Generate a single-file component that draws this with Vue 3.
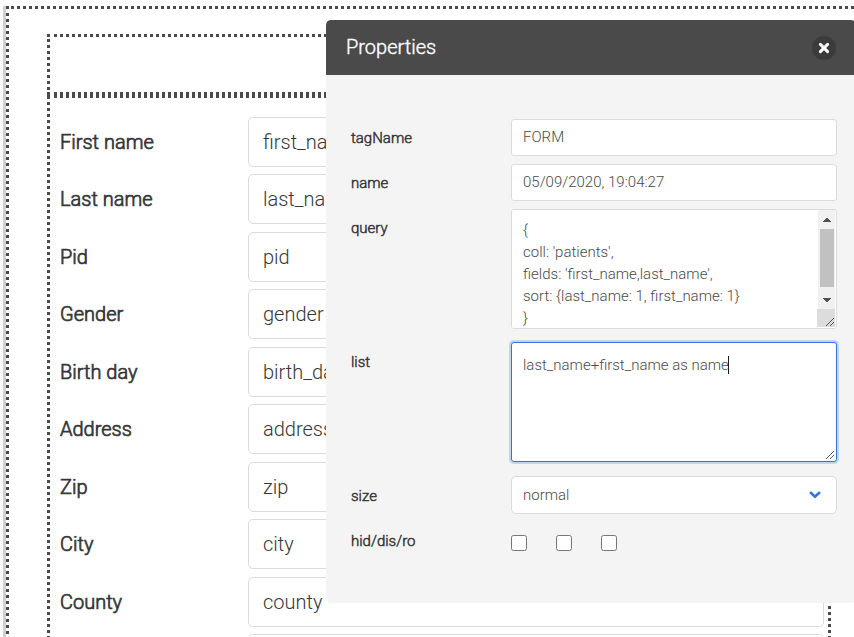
<script setup>
import { ref, onMounted } from 'vue'

const fields = [
  { label: 'First name', value: 'first_name' },
  { label: 'Last name', value: 'last_name' },
  { label: 'Pid', value: 'pid' },
  { label: 'Gender', value: 'gender' },
  { label: 'Birth day', value: 'birth_day' },
  { label: 'Address', value: 'address' },
  { label: 'Zip', value: 'zip' },
  { label: 'City', value: 'city' },
  { label: 'County', value: 'county' },
  { label: '', value: '' }
]

const tagName = ref('FORM')
const name = ref('05/09/2020, 19:04:27')
const query = ref(`{
coll: 'patients',
fields: 'first_name,last_name',
sort: {last_name: 1, first_name: 1}
}`)
const list = ref('last_name+first_name as name')
const size = ref('normal')
const flags = ref([])
const listBox = ref(null)
const caretLeft = ref(0)

// Places the drawn caret after the last character of the last line.
function placeCaret() {
  const style = getComputedStyle(listBox.value)
  const ctx = document.createElement('canvas').getContext('2d')
  ctx.font = `${style.fontWeight} ${style.fontSize} ${style.fontFamily}`
  const line = list.value.split('\n').pop()
  caretLeft.value = Math.round(ctx.measureText(line).width + parseInt(style.paddingLeft))
}

onMounted(() => {
  const el = listBox.value
  el.focus()
  el.setSelectionRange(el.value.length, el.value.length)
  placeCaret()
})
</script>

<template>
  <div class="page">
    <main class="canvas">
      <div class="block block-head"></div>
      <form class="block block-form" @submit.prevent>
        <div v-for="(f, i) in fields" :key="i" class="row">
          <label :for="'f-' + i">{{ f.label }}</label>
          <input :id="'f-' + i" class="field" type="text" :value="f.value" />
        </div>
      </form>
    </main>

    <section class="dialog" role="dialog" aria-labelledby="dialog-title">
      <header class="dialog-head">
        <h2 id="dialog-title">Properties</h2>
        <button type="button" class="close" aria-label="Close">
          <svg viewBox="0 0 12 12" width="12" height="12">
            <path d="M2.4 2.4 L9.6 9.6 M9.6 2.4 L2.4 9.6" stroke="#fff" stroke-width="3" stroke-linecap="round" fill="none" />
          </svg>
        </button>
      </header>
      <div class="dialog-body">
        <div class="prop">
          <label for="p-tag">tagName</label>
          <input id="p-tag" v-model="tagName" type="text" class="control" />
        </div>
        <div class="prop">
          <label for="p-name">name</label>
          <input id="p-name" v-model="name" type="text" class="control" />
        </div>
        <div class="prop">
          <label for="p-query">query</label>
          <div class="stack">
            <textarea id="p-query" v-model="query" class="control area scroll" spellcheck="false"></textarea>
            <svg class="scrollbar" viewBox="0 0 18 117" width="18" height="117" shape-rendering="crispEdges" aria-hidden="true">
              <rect x="1" width="17" height="99" fill="#f1f1f1" />
              <path d="M5 12 L9.5 7.5 L14 12 Z" fill="#505050" />
              <rect x="3" y="19" width="14" height="58" fill="#c1c1c1" />
              <path d="M5 88 L14 88 L9.5 92.5 Z" fill="#505050" />
              <rect y="99" width="18" height="18" fill="#dcdcdc" />
              <path d="M9 116 L17 108 M13 116 L17 112" stroke="#4f4f4f" shape-rendering="auto" />
            </svg>
          </div>
        </div>
        <div class="prop list-prop">
          <label for="p-list">list</label>
          <div class="stack">
            <textarea id="p-list" ref="listBox" v-model="list" class="control area list-area" spellcheck="false" @input="placeCaret"></textarea>
            <span class="caret" :style="{ left: caretLeft + 'px' }"></span>
            <svg class="grip" viewBox="0 0 10 10" width="10" height="10" aria-hidden="true">
              <path d="M1 9 L9 1 M5 9 L9 5" stroke="#5a5a5a" fill="none" />
            </svg>
          </div>
        </div>
        <div class="prop size-prop">
          <label for="p-size">size</label>
          <div class="select">
            <select id="p-size" v-model="size" class="control">
              <option>normal</option>
              <option>small</option>
              <option>large</option>
            </select>
            <svg viewBox="0 0 12 8" width="12" height="8">
              <path d="M1.8 1.8 L6 5.8 L10.2 1.8" stroke="#3273dc" stroke-width="2.6" stroke-linecap="round" fill="none" />
            </svg>
          </div>
        </div>
        <div class="prop" role="group" aria-labelledby="p-flags">
          <span id="p-flags" class="name">hid/dis/ro</span>
          <div class="checks">
            <input v-model="flags" type="checkbox" value="hid" aria-label="hid" />
            <input v-model="flags" type="checkbox" value="dis" aria-label="dis" />
            <input v-model="flags" type="checkbox" value="ro" aria-label="ro" />
          </div>
        </div>
      </div>
    </section>
  </div>
</template>

<style>
body {
  background: #fff;
}
</style>

<style scoped>
.page,
.page * {
  box-sizing: border-box;
}
.page {
  position: relative;
  height: 100vh;
  overflow: hidden;
  padding: 6px 0 0 3px;
  font-family: Roboto, "Open Sans", sans-serif;
  font-weight: 300;
  color: #4a4a4a;
}
.canvas {
  border-top: 3px dotted #4a4a4a;
  border-left: 3px dotted #4a4a4a;
  padding: 25px 23px 0 38px;
  box-shadow: -3px 0 0 #d0d0d0;
  margin-left: 3px;
}
.block {
  border: 3px dotted #4a4a4a;
}
.block-head {
  height: 61px;
}
.block-form {
  padding: 19px 4px 0 10px;
}
.row {
  display: grid;
  grid-template-columns: 188px 1fr;
  align-items: center;
  margin-bottom: 7px;
}
.row:nth-child(even) {
  margin-bottom: 8px;
}
.row label {
  font-size: 20px;
  line-height: 24px;
  color: #363636;
  -webkit-text-stroke: 0.7px #363636;
}
.field {
  width: 100%;
  height: 50px;
  padding: 0 14px;
  border: 1px solid #dbdbdb;
  border-radius: 5px;
  background: #fff;
  font: inherit;
  font-size: 20px;
  color: #363636;
}
.dialog {
  position: absolute;
  top: 20px;
  left: 326px;
  right: -2px;
  border-radius: 5px;
  overflow: hidden;
  background: #f4f4f4;
}
.dialog-head {
  display: flex;
  align-items: center;
  justify-content: space-between;
  height: 55px;
  padding: 0 20px;
  background: #4a4a4a;
}
.dialog-head h2 {
  margin: 0;
  padding-bottom: 2px;
  font-size: 20px;
  font-weight: 300;
  color: #fff;
  -webkit-text-stroke: 0.4px #fff;
}
.close {
  display: grid;
  place-items: center;
  width: 24px;
  height: 24px;
  padding: 0;
  border: 0;
  border-radius: 50%;
  background: #3b3b3b;
}
.dialog-body {
  padding: 44px 19px 43px 25px;
}
.prop {
  display: grid;
  grid-template-columns: 160px 1fr;
  margin-bottom: 8px;
}
.prop label,
.name {
  padding-top: 8px;
  font-size: 15px;
  line-height: 22px;
  color: #363636;
  -webkit-text-stroke: 0.5px #363636;
}
.control {
  display: block;
  width: 100%;
  height: 37px;
  padding: 0 11px 2px;
  border: 1px solid #dbdbdb;
  border-radius: 3px;
  background-color: #fff;
  font: inherit;
  font-size: 15px;
  line-height: 22px;
  color: #4a4a4a;
}
.stack {
  position: relative;
}
.area {
  height: 120px;
  padding: 9px 11px;
  resize: none;
  outline: none;
}
.area:focus {
  border-color: #3273dc;
  box-shadow: 0 0 0 2px rgba(50, 115, 220, 0.25);
}
.scroll {
  overflow-y: scroll;
  scrollbar-width: none;
}
.scrollbar {
  position: absolute;
  top: 1px;
  right: 2px;
  pointer-events: none;
}
.grip {
  position: absolute;
  right: 2px;
  bottom: 2px;
  pointer-events: none;
}
.list-area {
  padding-top: 11px;
  caret-color: transparent;
}
.caret {
  display: none;
  position: absolute;
  top: 14px;
  width: 1px;
  height: 18px;
  background: #1a1a1a;
}
.list-area:focus + .caret {
  display: block;
}
.list-prop {
  margin-top: 13px;
}
.list-prop label {
  padding-top: 9px;
}
.size-prop {
  margin-top: 14px;
}
.size-prop label {
  padding-top: 9px;
}
.select {
  display: grid;
  align-items: center;
}
.select > * {
  grid-area: 1 / 1;
}
.select .control {
  height: 38px;
  appearance: none;
  border-radius: 5px;
  padding-bottom: 0;
}
.select svg {
  justify-self: end;
  margin-right: 16px;
  pointer-events: none;
}
.checks {
  display: flex;
  gap: 29px;
  padding-top: 13px;
}
.checks input {
  width: 16px;
  height: 16px;
  margin: 0;
}
</style>
